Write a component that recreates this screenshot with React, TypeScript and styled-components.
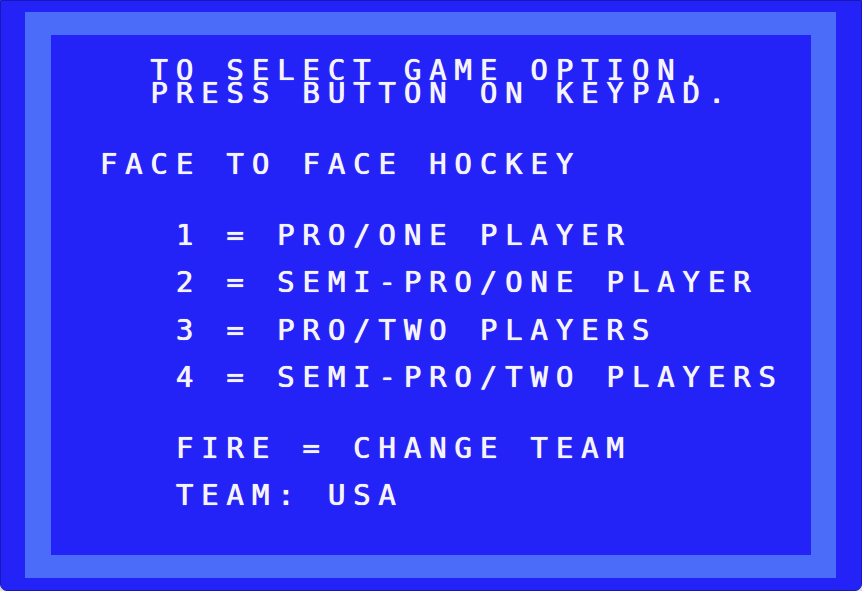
import styled, { createGlobalStyle } from "styled-components";

// The console draws text on a 30 x 22 grid of character cells.
const CELL_W = 760 / 30;
const CELL_H = 520 / 22;
// DejaVu glyphs sit a little right of the cell edge
const BEARING = 2;

const GlobalStyle = createGlobalStyle`
  html, body {
    margin: 0;
    padding: 0;
    background: #dcdcdc;
  }
`;

const options = [
  "1 = PRO/ONE PLAYER",
  "2 = SEMI-PRO/ONE PLAYER",
  "3 = PRO/TWO PLAYERS",
  "4 = SEMI-PRO/TWO PLAYERS",
];

const App: React.FC = () => {
  return (
    <>
      <GlobalStyle />
      <Window>
        <Overscan>
          <Screen>
            <Block>
              <Line $indent={4}>TO SELECT GAME OPTION,</Line>
              <Line $indent={4}>PRESS BUTTON ON KEYPAD.</Line>
            </Block>
            <Block $skip={2}>
              <Line $indent={2}>FACE TO FACE HOCKEY</Line>
            </Block>
            <Block $skip={2} $spaced>
              {options.map((option) => (
                <Line key={option} $indent={5}>
                  {option}
                </Line>
              ))}
            </Block>
            <Block $skip={2} $spaced>
              <Line $indent={5}>FIRE = CHANGE TEAM</Line>
              <Line $indent={5}>TEAM: USA</Line>
            </Block>
          </Screen>
        </Overscan>
      </Window>
    </>
  );
};

const Window = styled.div`
  box-sizing: border-box;
  width: 862px;
  height: 591px;
  padding: 11px 25px 12px 24px;

  background: #2323f7;
  border: 1px solid #1818b8;
  border-radius: 0 0 7px 7px;
`;

const Overscan = styled.div`
  box-sizing: border-box;
  width: 811px;
  height: 566px;
  padding: 23px 25px 23px 26px;

  background: #4b6cf8;
`;

const Screen = styled.div`
  box-sizing: border-box;
  width: 760px;
  height: 520px;
  padding-top: ${CELL_H}px;
  overflow: hidden;

  background: #2323f7;
  color: #f4f4ff;
  font-family: "DejaVu Sans Mono", "Liberation Mono", monospace;
  font-size: 29px;
  line-height: ${CELL_H}px;
  letter-spacing: ${CELL_W - 29 * 0.602}px;
  text-shadow: 0 0 1px rgba(255, 255, 255, 0.8), 0.5px 0 0 #f4f4ff;
`;

interface BlockProps {
  $skip?: number;
  $spaced?: boolean;
}

// $skip is the number of blank rows above a block
const Block = styled.div<BlockProps>`
  display: flex;
  flex-direction: column;
  gap: ${({ $spaced }) => ($spaced ? CELL_H : 0)}px;
  margin-top: ${({ $skip = 0 }) => $skip * CELL_H}px;
`;

interface LineProps {
  $indent: number;
}

const Line = styled.div<LineProps>`
  height: ${CELL_H}px;
  padding-left: ${({ $indent }) => $indent * CELL_W - BEARING}px;
  white-space: pre;
`;

export default App;
